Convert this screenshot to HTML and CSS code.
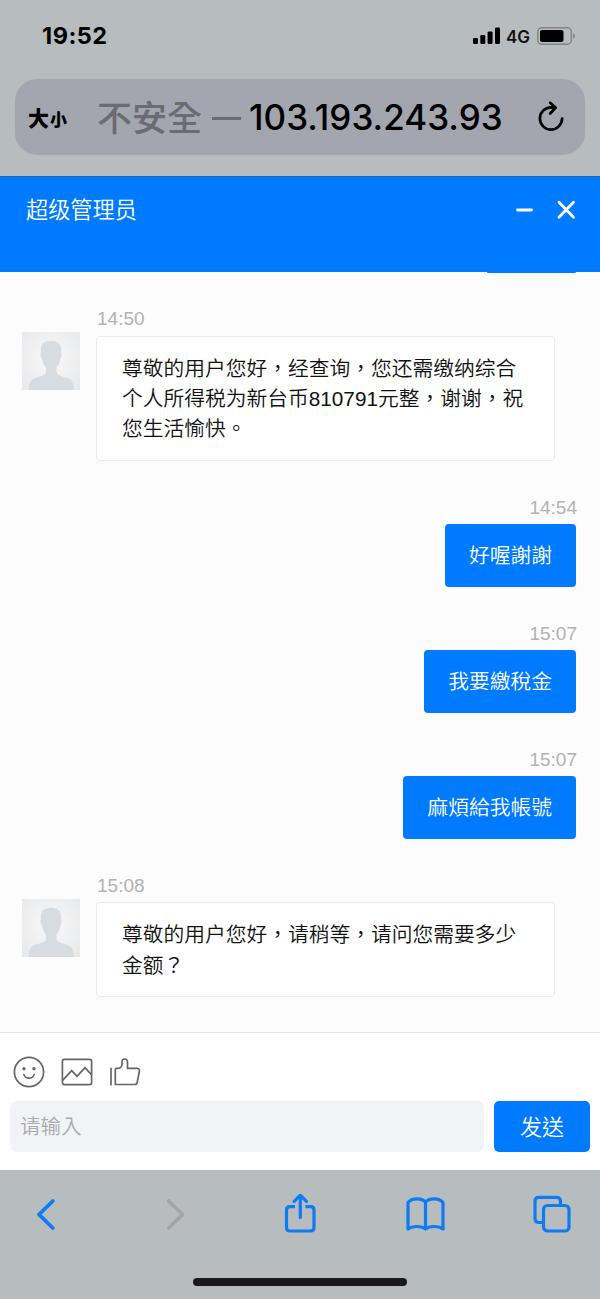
FILE: index.html
```html
<!DOCTYPE html>
<html lang="zh-TW">
<head>
    <meta charset="UTF-8">
    <meta name="viewport" content="width=device-width, initial-scale=1.0">
    <title>超级管理员</title>
    <link rel="stylesheet" href="styles.css">
</head>
<body>
    <div class="browser-top">
        <div class="status-bar">
            <span class="clock">19:52</span>
            <div class="status-icons">
                <svg width="28" height="18" viewBox="0 0 28 18">
                    <rect x="0" y="11" width="5" height="6" rx="1.3"/>
                    <rect x="7.3" y="8" width="5" height="9" rx="1.3"/>
                    <rect x="14.6" y="4.5" width="5" height="12.5" rx="1.3"/>
                    <rect x="22" y="0.5" width="5" height="16.5" rx="1.3"/>
                </svg>
                <span class="network">4G</span>
                <svg class="battery" width="39" height="18" viewBox="0 0 39 18">
                    <rect x="0.8" y="0.8" width="33.5" height="16.4" rx="4" fill="none" stroke="#7f8385" stroke-width="1.4"/>
                    <rect x="3" y="3" width="23.5" height="12" rx="2"/>
                    <path d="M36 6.3q2 1 2 2.7t-2 2.7z" fill="#7f8385"/>
                </svg>
            </div>
        </div>
        <div class="address-bar">
            <span class="text-size">大<small>小</small></span>
            <div class="address"><span class="insecure">不安全</span><span class="dash"></span><span class="host">103.193.243.93</span></div>
            <svg class="reload" width="28" height="32" viewBox="0 0 28 32">
                <path d="M25.1 17.500A11.1 11.1 0 1 1 14 6.400L18 6.600M13.2 1.800L18.6 6.800L13.2 12.500" fill="none" stroke="#000" stroke-width="2.7" stroke-linecap="round" stroke-linejoin="round"/>
            </svg>
        </div>
    </div>

    <div class="chat-header">
        <span class="chat-name">超级管理员</span>
        <svg width="62" height="20" viewBox="0 0 62 20" fill="none" stroke="#fff" stroke-width="2.8" stroke-linecap="round">
            <path d="M2.500 10h14M44 2.300l14.500 15M58.500 2.300l-14.500 15"/>
        </svg>
    </div>

    <div class="chat-body">
        <div class="last-bubble"></div>

        <div class="message">
            <svg class="avatar" viewBox="0 0 58 58">
                <defs>
                    <radialGradient id="avatarBg" cx="50%" cy="45%" r="75%">
                        <stop offset="0" stop-color="#f9f9f9"/>
                        <stop offset="1" stop-color="#e6e7e9"/>
                    </radialGradient>
                </defs>
                <rect width="58" height="58" fill="url(#avatarBg)"/>
                <path id="person" fill="#d7dce0" d="M6.5 58C7 50 9 47 14 45.5C19 43.8 24 43.5 24 39.5V35.5C21.500 33 20.500 30 20 26.500C18.500 25 18 21.500 19 20C18 12 22 8.800 29 8.800C36.500 8.800 40 13 39 20C40.300 21.500 39.500 25 38.300 26.500C38 30 37 33 34.500 35.500V39.500C34.500 43.500 39 43.800 44 45.500C49.500 47 51.500 50 52 58Z"/>
            </svg>
            <div class="content">
                <div class="time">14:50</div>
                <div class="bubble">尊敬的用户您好，经查询，您还需缴纳综合个人所得税为新台币810791元整，谢谢，祝您生活愉快。</div>
            </div>
        </div>

        <div class="message mine">
            <div class="content">
                <div class="time">14:54</div>
                <div class="bubble">好喔謝謝</div>
            </div>
        </div>

        <div class="message mine">
            <div class="content">
                <div class="time">15:07</div>
                <div class="bubble">我要繳稅金</div>
            </div>
        </div>

        <div class="message mine">
            <div class="content">
                <div class="time">15:07</div>
                <div class="bubble">麻煩給我帳號</div>
            </div>
        </div>

        <div class="message">
            <svg class="avatar" viewBox="0 0 58 58">
                <rect width="58" height="58" fill="url(#avatarBg)"/>
                <use href="#person"/>
            </svg>
            <div class="content">
                <div class="time">15:08</div>
                <div class="bubble">尊敬的用户您好，请稍等，请问您需要多少金额？</div>
            </div>
        </div>
    </div>

    <div class="chat-footer">
        <div class="tools">
            <svg width="32" height="32" viewBox="0 0 32 32">
                <circle cx="16" cy="16" r="14.600"/>
                <path d="M10.800 18.500q1.500 3.700 5.200 3.700t5.200-3.700"/>
                <circle class="eye" cx="11" cy="12.800" r="1.700"/>
                <circle class="eye" cx="21" cy="12.800" r="1.700"/>
            </svg>
            <svg width="32" height="32" viewBox="0 0 32 32">
                <rect x="1.400" y="3.300" width="29.200" height="25.400" rx="2.200"/>
                <path d="M1.800 24.200L10.700 14.700L16 20.300L24 11.700L30.300 18.500"/>
            </svg>
            <svg width="32" height="32" viewBox="0 0 32 32">
                <path d="M2 12.300V28.800M6.300 13.300V28.500H25.800Q27.800 28.500 28.200 26.500L30.400 15Q30.600 12.300 28 12.300H18.500V6Q18.500 3 15.700 3T13 6V8.500Q12.600 12 9 12.300H7.300Q6.300 12.300 6.300 13.300Z"/>
            </svg>
        </div>
        <div class="input-row">
            <input class="message-input" type="text" placeholder="请输入">
            <button class="send" type="button">发送</button>
        </div>
    </div>

    <div class="browser-bottom">
        <div class="nav">
            <svg width="40" height="40" viewBox="0 0 40 40"><path stroke-width="3.800" d="M24.800 7L11 20.500L24.800 34"/></svg>
            <svg class="disabled" width="40" height="40" viewBox="0 0 40 40"><path stroke-width="3.800" d="M14.700 7L28.500 20.500L14.700 34"/></svg>
            <svg width="40" height="40" viewBox="0 0 40 40"><path stroke-linecap="butt" d="M15 12.700H10Q6.500 12.700 6.500 16.200V33.500Q6.500 37 10 37H30.500Q34 37 34 33.500V16.200Q34 12.700 30.500 12.700H25.500"/><path d="M20.300 23.500V2M14.200 7.300L20.300 1.200L26.400 7.300"/></svg>
            <svg width="40" height="40" viewBox="0 0 40 40"><path d="M19.500 8Q17 4.800 11 4.800Q5 4.800 2 8.500V35Q5.500 32.500 11 32.500Q16.500 32.500 19.500 35Q22.500 32.500 28 32.500Q33.500 32.500 37 35V8.500Q34 4.800 28 4.800Q22 4.800 19.500 8ZM19.500 8V35"/></svg>
            <svg width="40" height="40" viewBox="0 0 40 40"><path d="M11 28.500H7Q3 28.500 3 24.500V7.300Q3 3.300 7 3.300H24.500Q28.500 3.300 28.500 7.300V11.500"/><rect x="11.500" y="11.500" width="25.500" height="25.500" rx="4"/></svg>
        </div>
        <div class="home-indicator"></div>
    </div>
</body>
</html>
```
FILE: styles.css
```css
* {
    box-sizing: border-box;
}
body {
    margin: 0;
    height: 1299px;
    display: flex;
    flex-direction: column;
    overflow: hidden;
    background-color: #fcfcfc;
    color: #111;
    font-family: 'Liberation Sans', 'Noto Sans CJK TC', sans-serif;
}
svg {
    display: block;
    flex-shrink: 0;
}

/* 浏览器顶部 */
.browser-top {
    height: 177px;
    background-color: #b7bcbf;
    border-bottom: 1px solid #2464ae;
    flex-shrink: 0;
}
.status-bar {
    height: 79px;
    padding: 7px 24px 14px 42px;
    display: flex;
    justify-content: space-between;
    align-items: center;
    font-family: Inter, sans-serif;
}
.clock {
    margin-bottom: 2px;
    font-size: 23.5px;
    font-weight: 700;
    letter-spacing: 0.5px;
    color: #000;
}
.status-icons {
    display: flex;
    align-items: center;
}
.network {
    font-size: 17px;
    font-weight: 600;
    margin: 1px 7px 0 5px;
}
.address-bar {
    height: 76px;
    margin: 0 15px;
    padding: 0 20px 0 13px;
    display: flex;
    align-items: center;
    background-color: #a3a6af;
    border-radius: 22px;
    color: #000;
}
.text-size {
    width: 69px;
    font-size: 21px;
    font-weight: 900;
    white-space: nowrap;
}
.text-size small {
    font-size: 17px;
    margin-left: 1px;
}
.address {
    flex: 1;
    display: flex;
    align-items: center;
    white-space: nowrap;
}
.insecure {
    font-size: 35px;
    line-height: 50px;
    margin-top: 3px;
    font-weight: 500;
    color: #6a6c71;
}
.dash {
    width: 29px;
    height: 3px;
    margin: 3px 8px 0 10px;
    background-color: #6a6c71;
}
.host {
    font-family: Inter, sans-serif;
    font-size: 35px;
    font-weight: 500;
}

/* 聊天标题 */
.chat-header {
    height: 95px;
    padding: 17px 22px 0 26px;
    display: flex;
    justify-content: space-between;
    align-items: flex-start;
    background-color: #007aff;
    color: #fff;
    flex-shrink: 0;
}
.chat-name {
    font-size: 22.2px;
    line-height: 34px;
    font-weight: 350;
}
.chat-header svg {
    margin: 6px 1px 0 0;
}

/* 聊天内容 */
.chat-body {
    height: 760px;
    padding: 0 24px 0 22px;
    flex-shrink: 0;
}
.last-bubble {
    width: 89px;
    height: 1px;
    margin: 0 0 32px auto;
    background-color: #007aff;
    border-radius: 0 0 3px 3px;
}
.message {
    display: flex;
    align-items: flex-start;
    margin-bottom: 33px;
}
.avatar {
    width: 58px;
    height: 58px;
    margin: 27px 16px 0 0;
}
.time {
    height: 27px;
    margin-bottom: 3.6px;
    font-size: 19px;
    line-height: 28px;
    color: #b2b2b2;
}
.message:not(.mine) .time {
    padding-left: 1px;
}
.bubble {
    width: 459px;
    padding: 17px 23px 15px 25px;
    font-size: 20.75px;
    line-height: 30.4px;
    font-weight: 350;
    background-color: #fff;
    border: 1px solid #ebebeb;
    border-radius: 4px;
}
.mine {
    justify-content: flex-end;
}
.mine .time {
    text-align: right;
    margin-right: -1px;
}
.mine .content {
    display: flex;
    flex-direction: column;
    align-items: flex-end;
}
.mine .bubble {
    width: auto;
    padding: 17px 24px 15px;
    border: none;
    color: #fff;
    background-color: #007aff;
}

/* 输入区 */
.chat-footer {
    height: 138px;
    padding: 23px 10px 0;
    border-top: 1px solid #e6e6e6;
    background-color: #fff;
    flex-shrink: 0;
}
.tools {
    display: flex;
    gap: 16px;
    padding-left: 3px;
}
.tools svg {
    fill: none;
    stroke: #666;
    stroke-width: 1.7;
    stroke-linecap: round;
    stroke-linejoin: round;
}
.tools .eye {
    fill: #666;
    stroke: none;
}
.input-row {
    display: flex;
    gap: 10px;
    margin-top: 13px;
}
.message-input {
    flex: 1;
    height: 51px;
    padding: 0 10px;
    border: none;
    border-radius: 7px;
    background-color: #f2f3f7;
    font: 350 20.5px 'Liberation Sans', 'Noto Sans CJK TC', sans-serif;
}
.message-input::placeholder {
    color: #aaa;
}
.send {
    width: 96px;
    height: 51px;
    padding: 0 0 4px;
    border: none;
    border-radius: 5px;
    background-color: #007aff;
    color: #fff;
    font: 350 22px 'Liberation Sans', 'Noto Sans CJK TC', sans-serif;
}

/* 浏览器底部 */
.browser-bottom {
    height: 129px;
    padding-top: 24px;
    background-color: #b7bcbf;
    flex-shrink: 0;
}
.nav {
    display: flex;
    justify-content: space-between;
    padding: 0 28px;
}
.nav svg {
    fill: none;
    stroke: #0f7bf2;
    stroke-width: 3.2;
    stroke-linecap: round;
    stroke-linejoin: round;
}
.nav .disabled {
    stroke: #a2a4a7;
}
.home-indicator {
    width: 214px;
    height: 8px;
    margin: 44px auto 0;
    border-radius: 4px;
    background-color: #191919;
}
```
